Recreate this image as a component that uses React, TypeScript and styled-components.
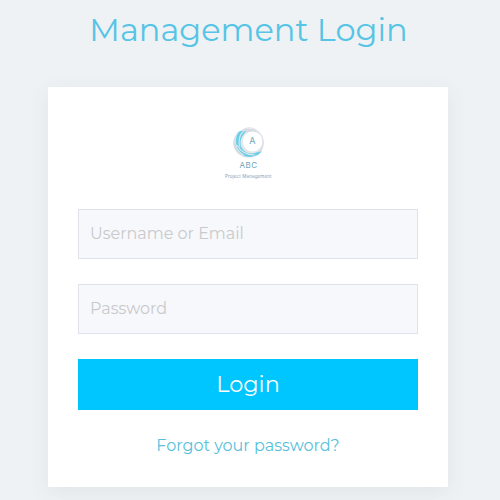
import React from 'react';
import styled, { createGlobalStyle } from 'styled-components';

const GlobalStyle = createGlobalStyle`
  * { box-sizing: border-box; }
  html, body { margin: 0; height: 100%; overflow: hidden; background: #eef2f5; }
  body { font-family: Montserrat, Inter, "Liberation Sans", sans-serif; }
`;

const Page = styled.main`
  width: 500px;
  height: 500px;
  padding: 0 52px 0 48px;
  overflow: hidden;
  background: #eef2f5;
  display: flex;
  flex-direction: column;
`;

const Title = styled.h1`
  margin: 0 -41px 0 -40px;
  height: 87px;
  padding-top: 10px;
  color: #55c4e5;
  font-size: 32px;
  font-weight: 400;
  line-height: 40px;
  text-align: center;
  white-space: nowrap;
`;

const Card = styled.form`
  width: 400px;
  height: 400px;
  flex: none;
  padding: 30px;
  display: flex;
  flex-direction: column;
  background: #fff;
  box-shadow: 0 5px 20px rgba(62, 73, 84, 0.08);
`;

const Logo = styled.svg`
  display: block;
  width: 80px;
  height: 75px;
  margin: -2px 129px 19px 132px;
`;

const Field = styled.input`
  width: 100%;
  height: 50px;
  flex: none;
  margin: 0 0 25px;
  padding: 0 11px 2px;
  border: 1px solid #dfe2ea;
  border-radius: 0;
  background: #f7f8fb;
  color: #555;
  font-family: inherit;
  font-size: 16px;
  font-weight: 400;
  outline: none;
  &::placeholder { color: #c9cacc; opacity: 1; }
`;

const Submit = styled.button`
  width: 100%;
  height: 51px;
  flex: none;
  padding: 0 0 1px;
  border: 0;
  background: #00c6ff;
  color: #fff;
  font-family: inherit;
  font-size: 22.4px;
  font-weight: 400;
`;

const Forgot = styled.a`
  margin-top: 26px;
  align-self: center;
  color: #58bfdc;
  font-size: 16px;
  font-weight: 400;
  line-height: 20px;
  text-decoration: none;
  white-space: nowrap;
`;

function BrandLogo() {
  return (
    <Logo viewBox="0 0 80 75" role="img" aria-label="ABC Project Management">
      <ellipse cx="38.5" cy="28" rx="15.2" ry="14.5" fill="#d5dbe1" />
      <path d="M30 16 C24 20 24.5 29 27 34 C30 40 37 43 43 41.5 C47 41 50 39 52 36 C44 39 37 37 33.5 33 C30 28 31 22 36 16 Z" fill="#6bcfea" />
      <path d="M28 17 C23 25 25 35 34 40.5 M27 30 C30 36 36 40 45 40 M35 15 C29 19 28 27 30 32" fill="none" stroke="#dce6eb" strokeWidth="1.1" />
      <circle cx="41.5" cy="27.5" r="11" fill="#e3e7ea" />
      <circle cx="42.7" cy="26.4" r="10" fill="#fff" />
      <path d="M33 14.5 C41 10 50 15 52.5 23 C54 30 51 35 48 37" fill="none" stroke="#dce2e8" strokeWidth="1" />
      <text x="42.3" y="29.2" textAnchor="middle" fontSize="9" fontFamily="Inter, sans-serif" fill="#6ba3ba">A</text>
      <text x="38.5" y="53" textAnchor="middle" fontSize="8" letterSpacing="0.5" fontFamily="Inter, sans-serif" fill="#6ea3b8">ABC</text>
      <text x="15" y="62.6" fontSize="4.5" textLength="46.5" fontFamily="Inter, sans-serif" fill="#8299b5">Project Management</text>
    </Logo>
  );
}

export default function App() {
  return (
    <>
      <GlobalStyle />
      <Page>
        <Title>Management Login</Title>
        <Card onSubmit={(e: React.FormEvent) => e.preventDefault()}>
          <BrandLogo />
          <Field type="text" placeholder="Username or Email" />
          <Field type="password" placeholder="Password" />
          <Submit type="submit">Login</Submit>
          <Forgot href="#">Forgot your password?</Forgot>
        </Card>
      </Page>
    </>
  );
}
